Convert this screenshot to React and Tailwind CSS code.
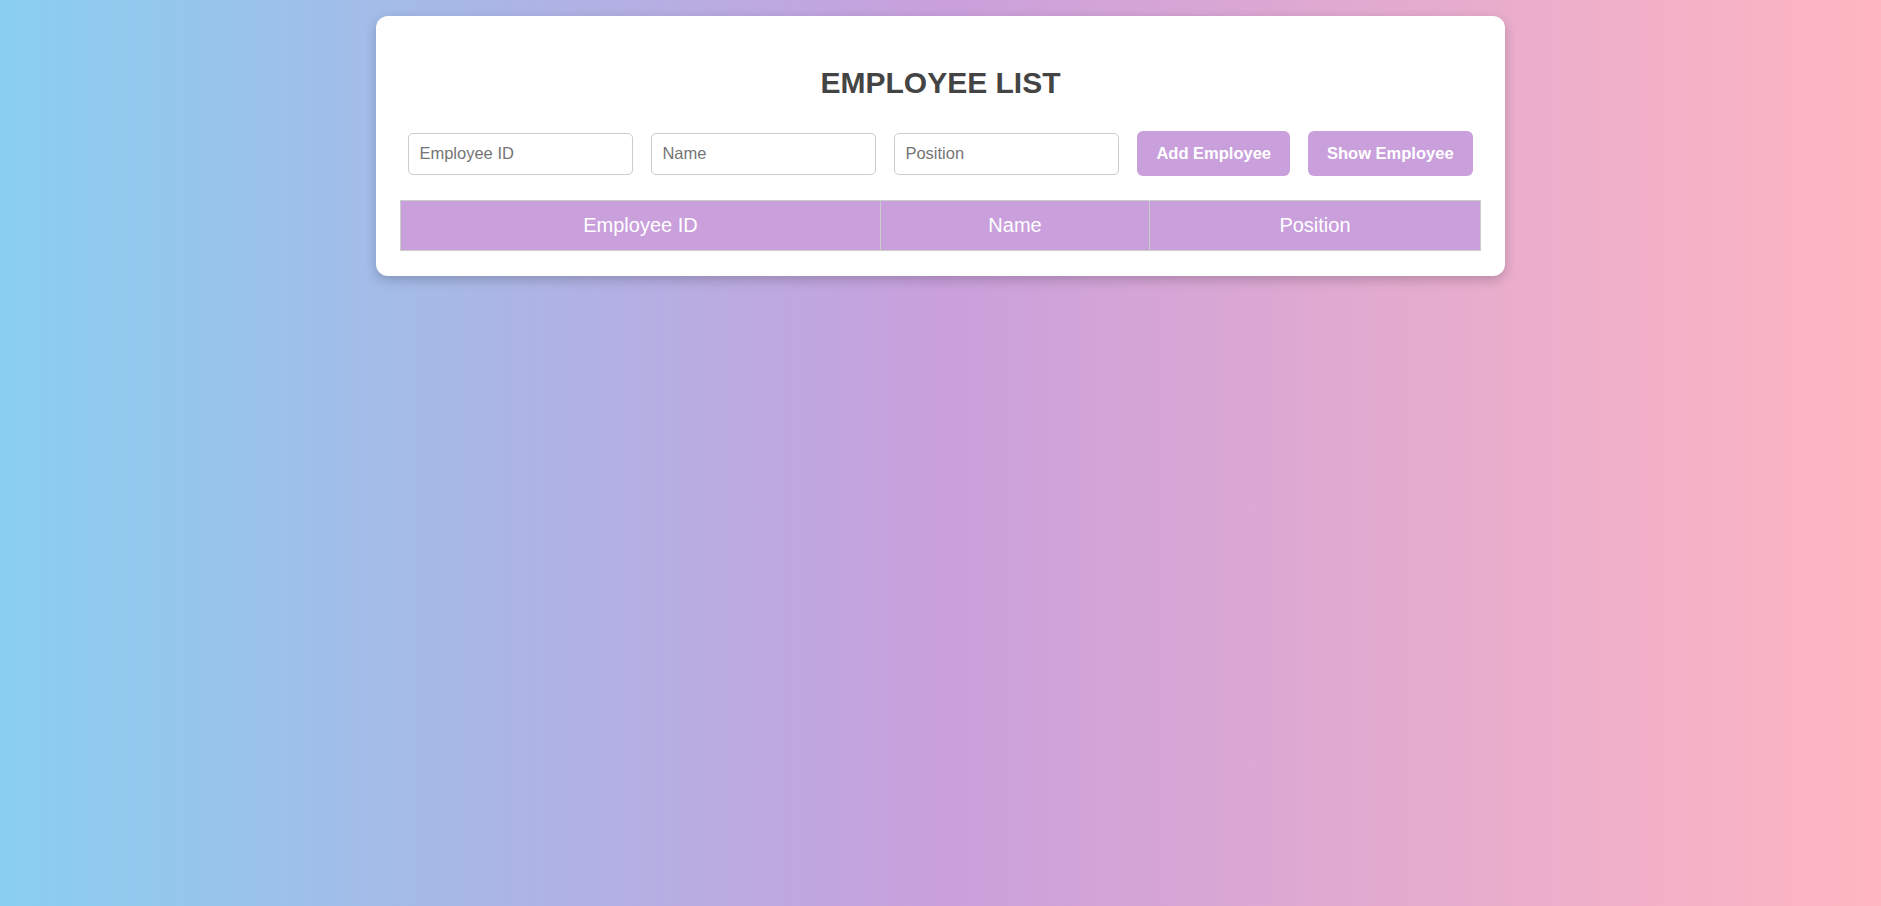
import { useState } from "react";

const App = () => {
  const [employees, setEmployees] = useState([]);
  const [form, setForm] = useState({ id: "", name: "", position: "" });
  const [show, setShow] = useState(false);

  const update = (key) => (e) => setForm((f) => ({ ...f, [key]: e.target.value }));

  const addEmployee = () => {
    if (!form.id.trim() || !form.name.trim() || !form.position.trim()) return;
    setEmployees((prev) => [...prev, form]);
    setForm({ id: "", name: "", position: "" });
  };

  const inputClass =
    "h-[42px] w-[225px] rounded-[5px] border border-[#ccc] bg-white px-[10px] text-[16.5px] text-[#333] placeholder:text-[#757575] focus:outline-none";
  const buttonClass =
    "h-[45px] rounded-[6px] bg-[#c9a0dc] px-[19px] text-[16.5px] font-bold text-white";

  return (
    <div className="min-h-screen bg-linear-to-r/srgb from-[#89cff0] via-[#c9a0dc] to-[#ffb6c1] pt-[16px] font-['Liberation_Sans',Arial,sans-serif]">
      <div className="mx-auto w-[60%] rounded-[12px] bg-white px-[24px] pb-[25px] pt-[26px] shadow-[0_4px_12px_rgba(0,0,0,0.2)]">
        <h2 className="mt-[24px] text-center text-[30px] font-bold leading-[34px] text-[#444]">
          EMPLOYEE LIST
        </h2>

        <div className="mt-[31px] flex items-center justify-center gap-[18px]">
          <input
            className={inputClass}
            placeholder="Employee ID"
            value={form.id}
            onChange={update("id")}
          />
          <input
            className={inputClass}
            placeholder="Name"
            value={form.name}
            onChange={update("name")}
          />
          <input
            className={inputClass}
            placeholder="Position"
            value={form.position}
            onChange={update("position")}
          />
          <button type="button" className={buttonClass} onClick={addEmployee}>
            Add Employee
          </button>
          <button type="button" className={buttonClass} onClick={() => setShow(true)}>
            Show Employee
          </button>
        </div>

        <table className="mt-[24px] w-full border-collapse text-[20px]">
          <thead>
            <tr className="bg-[#c9a0dc] text-white">
              <th className="border border-[#ccc] px-[12px] py-[13px] font-normal leading-[23px]">
                Employee ID
              </th>
              <th className="border border-[#ccc] px-[12px] py-[13px] font-normal leading-[23px]">
                Name
              </th>
              <th className="border border-[#ccc] px-[12px] py-[13px] font-normal leading-[23px]">
                Position
              </th>
            </tr>
          </thead>
          <tbody>
            {show &&
              employees.map((emp, i) => (
                <tr key={`${emp.id}-${i}`} className="text-[#333]">
                  <td className="border border-[#ccc] px-[12px] py-[10px] text-center">{emp.id}</td>
                  <td className="border border-[#ccc] px-[12px] py-[10px] text-center">{emp.name}</td>
                  <td className="border border-[#ccc] px-[12px] py-[10px] text-center">{emp.position}</td>
                </tr>
              ))}
          </tbody>
        </table>
      </div>
    </div>
  );
};

export default App;
